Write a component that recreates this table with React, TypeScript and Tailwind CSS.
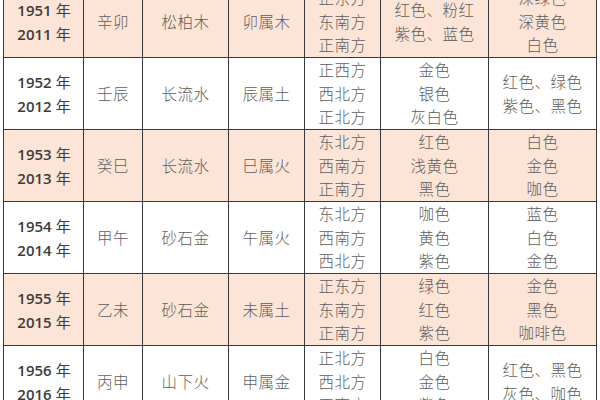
import React from "react";

type Row = {
  y: [string, string];
  gz: string;
  ny: string;
  sx: string;
  dir: string[];
  c1: string[];
  c2: string[];
  pink: boolean;
};

const rows: Row[] = [
  { y: ["1951", "2011"], gz: "辛卯", ny: "松柏木", sx: "卯属木", dir: ["正东方", "东南方", "正南方"], c1: ["红色、粉红", "紫色、蓝色"], c2: ["深绿色", "深黄色", "白色"], pink: true },
  { y: ["1952", "2012"], gz: "壬辰", ny: "长流水", sx: "辰属土", dir: ["正西方", "西北方", "正北方"], c1: ["金色", "银色", "灰白色"], c2: ["红色、绿色", "紫色、黑色"], pink: false },
  { y: ["1953", "2013"], gz: "癸巳", ny: "长流水", sx: "巳属火", dir: ["东北方", "西南方", "正南方"], c1: ["红色", "浅黄色", "黑色"], c2: ["白色", "金色", "咖色"], pink: true },
  { y: ["1954", "2014"], gz: "甲午", ny: "砂石金", sx: "午属火", dir: ["东北方", "西南方", "西北方"], c1: ["咖色", "黄色", "紫色"], c2: ["蓝色", "白色", "金色"], pink: false },
  { y: ["1955", "2015"], gz: "乙未", ny: "砂石金", sx: "未属土", dir: ["正东方", "东南方", "正南方"], c1: ["绿色", "红色", "紫色"], c2: ["金色", "黑色", "咖啡色"], pink: true },
  { y: ["1956", "2016"], gz: "丙申", ny: "山下火", sx: "申属金", dir: ["正北方", "西北方", "正南方"], c1: ["白色", "金色", "紫色"], c2: ["红色、黑色", "灰色、咖色"], pink: false },
];

const cjk = "font-['Noto_Sans_CJK_SC',sans-serif]";

function Lines({ items }: { items: string[] }) {
  return (
    <div className="flex flex-col items-center">
      {items.map((t, i) => (
        <div key={i} className="leading-[23.5px] tracking-[0.5px]">
          {t}
        </div>
      ))}
    </div>
  );
}

export default function App() {
  return (
    <div className="w-[600px] h-[400px] overflow-hidden bg-white">
      <div className={`ml-[3px] mt-[-14px] w-[594px] text-[#5e5e5e] text-[15.5px] font-light ${cjk}`}>
        {rows.map((r, i) => (
          <div
            key={i}
            className={`grid grid-cols-[81px_59px_86px_76px_76px_108px_108px] h-[72px] ${r.pink ? "bg-[#fce4d6]" : "bg-white"}`}
          >
            <div className="border-l border-r border-b border-[#3a3a3a] flex flex-col items-center justify-center text-[#3c3c3c]">
              {r.y.map((yy, k) => (
                <div key={k} className="leading-[23px] text-[15px] pl-[1px] font-normal">
                  <span className="font-['Open_Sans',sans-serif] font-semibold">{yy}</span>
                  <span className={`${cjk} ml-[4px]`}>年</span>
                </div>
              ))}
            </div>
            <div className="border-r border-b border-[#3a3a3a] flex items-center justify-center tracking-[0.5px]">{r.gz}</div>
            <div className="border-r border-b border-[#3a3a3a] flex items-center justify-center tracking-[0.5px]">{r.ny}</div>
            <div className="border-r border-b border-[#3a3a3a] flex items-center justify-center tracking-[0.5px]">{r.sx}</div>
            <div className="border-r border-b border-[#3a3a3a] flex items-center justify-center">
              <Lines items={r.dir} />
            </div>
            <div className="border-r border-b border-[#3a3a3a] flex items-center justify-center">
              <Lines items={r.c1} />
            </div>
            <div className="border-r border-b border-[#3a3a3a] flex items-center justify-center">
              <Lines items={r.c2} />
            </div>
          </div>
        ))}
      </div>
    </div>
  );
}
